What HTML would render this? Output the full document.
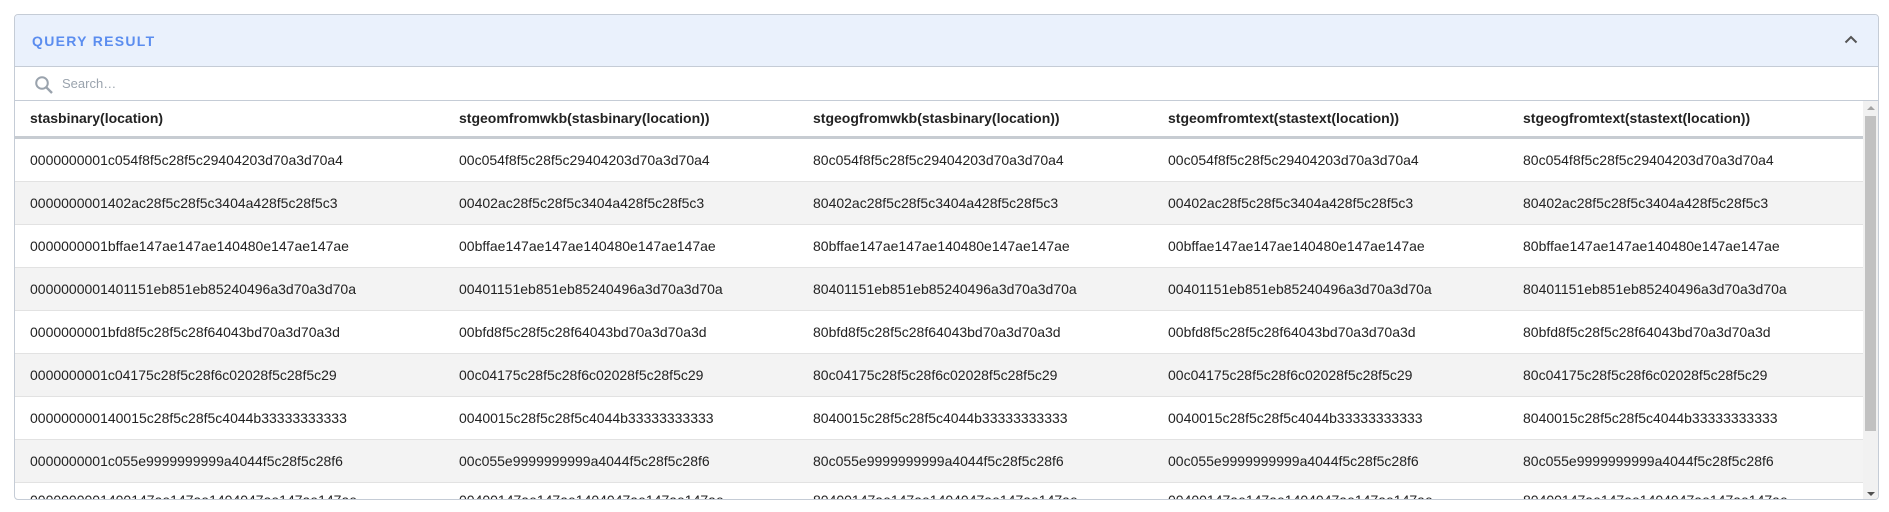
<!DOCTYPE html>
<html><head><meta charset="utf-8"><style>
*{box-sizing:border-box;margin:0;padding:0}
body{width:1889px;height:512px;background:#fff;font-family:"Liberation Sans",sans-serif;color:#222;overflow:hidden;position:relative}
.panel{position:absolute;left:14px;top:14px;width:1865px;height:486px;border:1px solid #c5ccd6;border-radius:4px;overflow:hidden;background:#fff}
.hdr{height:52px;background:#eaf1fc;border-bottom:1px solid #c5ccd6;position:relative}
.hdr .t{position:absolute;left:17px;top:18px;font-size:14px;font-weight:bold;letter-spacing:1.3px;color:#5b8def}
.hdr svg{position:absolute;right:20px;top:20px}
.search{height:34px;border-bottom:1px solid #c5ccd6;position:relative}
.search svg{position:absolute;left:19px;top:8px}
.search span{position:absolute;left:47px;top:9px;font-size:13px;color:#9aa3ad}
.tbl{position:absolute;left:0;top:86px;width:1848px}
.row{height:43px;position:relative;border-bottom:1px solid #e2e2e2}
.row.alt{background:#f3f3f3}
.row.h{height:38px;border-bottom:3px solid #c7ccd2;font-weight:bold;font-size:14px}
.row div{position:absolute;top:13px;font-size:14px;white-space:nowrap}
.row.h div{top:9px}
.row.last div{top:9px}
.c1{left:15px}.c2{left:444px}.c3{left:798px}.c4{left:1153px}.c5{left:1508px}
.sb{position:absolute;left:1848px;top:86px;width:16px;height:400px;background:#f1f1f1}
.thumb{position:absolute;left:2px;top:15px;width:11px;height:315px;background:#c1c1c1}
.ar{position:absolute;left:4px;width:0;height:0;border-left:4px solid transparent;border-right:4px solid transparent}
.up{top:5px;border-bottom:4px solid #a3a3a3}
.dn{bottom:5px;border-top:4px solid #505050}
</style></head><body>
<div class="panel">
<div class="hdr"><div class="t">QUERY RESULT</div>
<svg width="14" height="9" viewBox="0 0 14 9"><path d="M1.5 7.5L7 2l5.5 5.5" stroke="#555" stroke-width="2" fill="none"/></svg></div>
<div class="search"><svg width="20" height="20" viewBox="0 0 20 20"><circle cx="8" cy="8" r="5.8" stroke="#9aa3ad" stroke-width="2" fill="none"/><path d="M12.3 12.3L18 18" stroke="#9aa3ad" stroke-width="2.4"/></svg><span>Search…</span></div>
<div class="tbl">
<div class="row h"><div class="c1">stasbinary(location)</div><div class="c2">stgeomfromwkb(stasbinary(location))</div><div class="c3">stgeogfromwkb(stasbinary(location))</div><div class="c4">stgeomfromtext(stastext(location))</div><div class="c5">stgeogfromtext(stastext(location))</div></div>
<div class="row"><div class="c1">0000000001c054f8f5c28f5c29404203d70a3d70a4</div><div class="c2">00c054f8f5c28f5c29404203d70a3d70a4</div><div class="c3">80c054f8f5c28f5c29404203d70a3d70a4</div><div class="c4">00c054f8f5c28f5c29404203d70a3d70a4</div><div class="c5">80c054f8f5c28f5c29404203d70a3d70a4</div></div>
<div class="row alt"><div class="c1">0000000001402ac28f5c28f5c3404a428f5c28f5c3</div><div class="c2">00402ac28f5c28f5c3404a428f5c28f5c3</div><div class="c3">80402ac28f5c28f5c3404a428f5c28f5c3</div><div class="c4">00402ac28f5c28f5c3404a428f5c28f5c3</div><div class="c5">80402ac28f5c28f5c3404a428f5c28f5c3</div></div>
<div class="row"><div class="c1">0000000001bffae147ae147ae140480e147ae147ae</div><div class="c2">00bffae147ae147ae140480e147ae147ae</div><div class="c3">80bffae147ae147ae140480e147ae147ae</div><div class="c4">00bffae147ae147ae140480e147ae147ae</div><div class="c5">80bffae147ae147ae140480e147ae147ae</div></div>
<div class="row alt"><div class="c1">0000000001401151eb851eb85240496a3d70a3d70a</div><div class="c2">00401151eb851eb85240496a3d70a3d70a</div><div class="c3">80401151eb851eb85240496a3d70a3d70a</div><div class="c4">00401151eb851eb85240496a3d70a3d70a</div><div class="c5">80401151eb851eb85240496a3d70a3d70a</div></div>
<div class="row"><div class="c1">0000000001bfd8f5c28f5c28f64043bd70a3d70a3d</div><div class="c2">00bfd8f5c28f5c28f64043bd70a3d70a3d</div><div class="c3">80bfd8f5c28f5c28f64043bd70a3d70a3d</div><div class="c4">00bfd8f5c28f5c28f64043bd70a3d70a3d</div><div class="c5">80bfd8f5c28f5c28f64043bd70a3d70a3d</div></div>
<div class="row alt"><div class="c1">0000000001c04175c28f5c28f6c02028f5c28f5c29</div><div class="c2">00c04175c28f5c28f6c02028f5c28f5c29</div><div class="c3">80c04175c28f5c28f6c02028f5c28f5c29</div><div class="c4">00c04175c28f5c28f6c02028f5c28f5c29</div><div class="c5">80c04175c28f5c28f6c02028f5c28f5c29</div></div>
<div class="row"><div class="c1">000000000140015c28f5c28f5c4044b33333333333</div><div class="c2">0040015c28f5c28f5c4044b33333333333</div><div class="c3">8040015c28f5c28f5c4044b33333333333</div><div class="c4">0040015c28f5c28f5c4044b33333333333</div><div class="c5">8040015c28f5c28f5c4044b33333333333</div></div>
<div class="row alt"><div class="c1">0000000001c055e9999999999a4044f5c28f5c28f6</div><div class="c2">00c055e9999999999a4044f5c28f5c28f6</div><div class="c3">80c055e9999999999a4044f5c28f5c28f6</div><div class="c4">00c055e9999999999a4044f5c28f5c28f6</div><div class="c5">80c055e9999999999a4044f5c28f5c28f6</div></div>
<div class="row last"><div class="c1">0000000001400147ae147ae1404047ae147ae147ae</div><div class="c2">00400147ae147ae1404047ae147ae147ae</div><div class="c3">80400147ae147ae1404047ae147ae147ae</div><div class="c4">00400147ae147ae1404047ae147ae147ae</div><div class="c5">80400147ae147ae1404047ae147ae147ae</div></div>
</div>
<div class="sb"><div class="ar up"></div><div class="thumb"></div><div class="ar dn"></div></div>
</div>
</body></html>
